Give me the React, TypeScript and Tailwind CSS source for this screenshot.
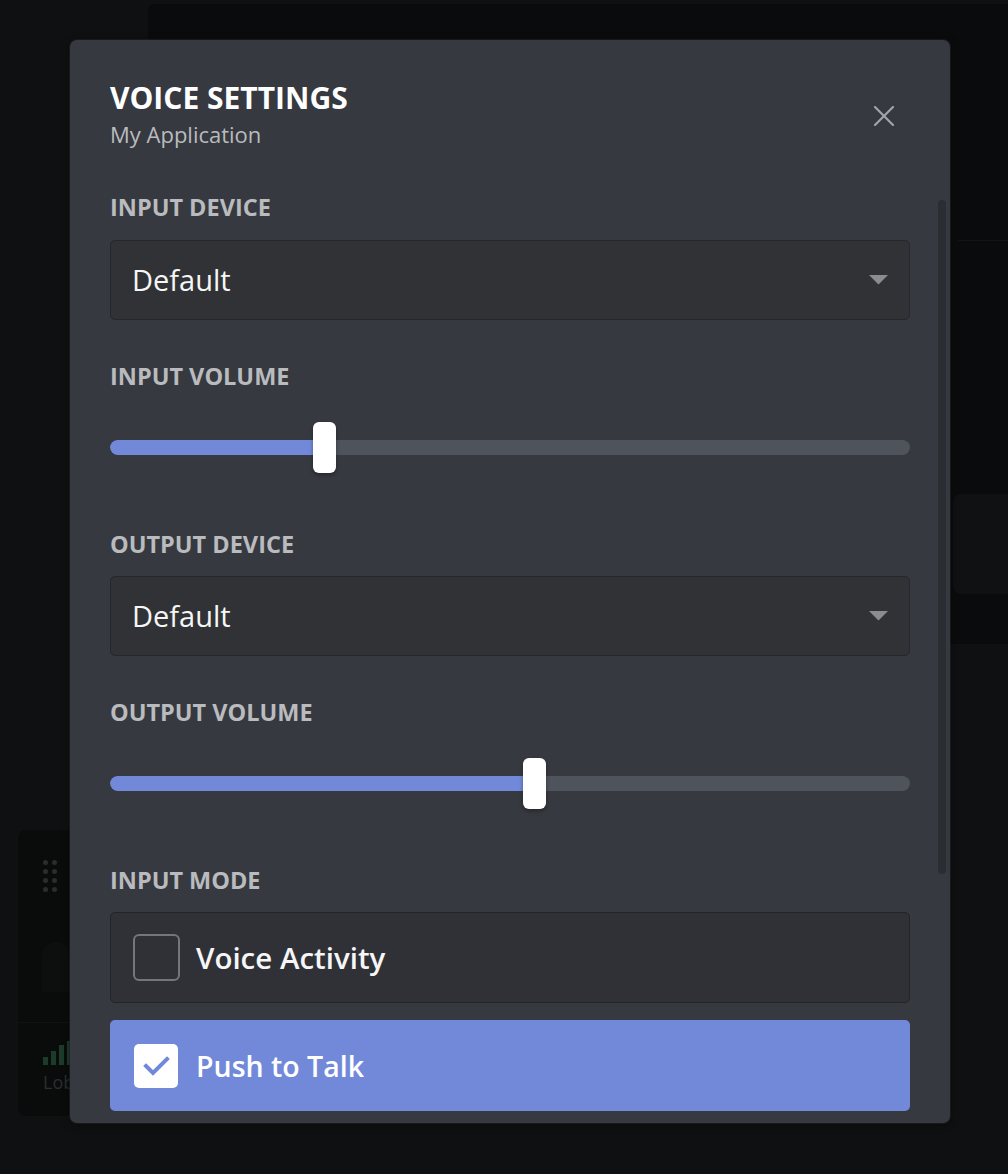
import React from 'react'

const font = { fontFamily: '"Open Sans", "Noto Sans", sans-serif' }

interface SliderProps {
  value: number
}

const Slider: React.FC<SliderProps> = ({ value }) => {
  return (
    <div className="relative h-[51px] flex items-center">
      <div className="w-full h-[15px] rounded-full bg-[#4f545c] overflow-hidden">
        <div className="h-full bg-[#7289da] rounded-full" style={{ width: `${value}%` }} />
      </div>
      <div
        className="absolute top-0 w-[23px] h-[51px] -ml-[11.5px] bg-white rounded-[6px] shadow-[0_2px_4px_rgba(0,0,0,0.35)]"
        style={{ left: `${value}%` }}
      />
    </div>
  )
}

const Select: React.FC<{ label: string }> = ({ label }) => {
  return (
    <div className="h-[80px] rounded-[5px] bg-[#303236] border border-[#25272b] flex items-center justify-between pl-[21px] pr-[21px]">
      <span className="text-[29px] leading-[38px] text-[#f6f6f7]">{label}</span>
      <svg width="19" height="10" viewBox="0 0 19 10">
        <polygon points="0,0 19,0 9.5,9.5" fill="#8a8c90" />
      </svg>
    </div>
  )
}

const Label: React.FC<{ text: string }> = ({ text }) => (
  <div className="text-[23.5px] leading-[28px] font-bold text-[#b9bbbe] uppercase">{text}</div>
)

const App: React.FC = () => {
  return (
    <div className="relative w-[1008px] h-[1174px] overflow-hidden bg-[#0f1011]" style={font}>
      {/* dimmed app behind the modal */}
      <div className="absolute left-[148px] top-[4px] w-[870px] h-[640px] rounded-[6px] bg-[#0a0b0c]">
        <div className="absolute left-[810px] top-[236px] w-[60px] h-px bg-[#141516]" />
        <div className="absolute left-[805px] top-[490px] w-[70px] h-[100px] rounded-l-[8px] bg-[#101112]" />
      </div>
      <div className="absolute left-[18px] top-[830px] w-[120px] h-[286px] rounded-[8px] bg-[#0a0b0b]">
        <div className="grid grid-cols-2 gap-[4px] w-[14px] ml-[25px] mt-[30px]">
          {Array.from({ length: 8 }).map((_, i) => (
            <span key={i} className="w-[5px] h-[5px] rounded-full bg-[#2a2c2f]" />
          ))}
        </div>
        <div className="mt-[50px] ml-[24px] w-[28px] h-[50px] rounded-t-full bg-[#0d0e0e]" />
        <div className="mt-[30px] h-px bg-[#111213]" />
        <div className="mt-[18px] ml-[25px] flex items-end gap-[3px] h-[24px]">
          <span className="w-[5px] h-[8px] bg-[#1d3b2a]" />
          <span className="w-[5px] h-[14px] bg-[#1d3b2a]" />
          <span className="w-[5px] h-[20px] bg-[#1d3b2a]" />
          <span className="w-[5px] h-[24px] bg-[#1d3b2a]" />
        </div>
        <div className="ml-[25px] mt-[4px] text-[18px] text-[#2c2e31]">Lobby</div>
      </div>

      {/* modal */}
      <div className="absolute left-[70px] top-[40px] w-[880px] h-[1083px] rounded-[7px] bg-[#36393f] shadow-[0_0_0_1px_rgba(32,34,37,0.6),0_2px_10px_rgba(0,0,0,0.4)] overflow-hidden">
        <div className="relative pt-[40px] pl-[40px] pr-[40px]">
          <div className="text-[30px] leading-[36px] font-bold text-white">VOICE SETTINGS</div>
          <div className="mt-[4px] text-[22px] leading-[28px] text-[#b9bbbe]">My Application</div>
          <button className="absolute left-[804px] top-[66px] w-[20px] h-[20px]">
            <svg width="20" height="20" viewBox="0 0 20 20" stroke="#a3a5a8" strokeWidth="2.2" strokeLinecap="round">
              <line x1="1" y1="1" x2="19" y2="19" />
              <line x1="19" y1="1" x2="1" y2="19" />
            </svg>
          </button>
        </div>

        <div className="flex items-start mt-[45px]">
          <div className="w-[800px] ml-[40px] shrink-0">
            <Label text="Input Device" />
            <div className="mt-[19px]">
              <Select label="Default" />
            </div>
            <div className="mt-[42px]">
              <Label text="Input Volume" />
            </div>
            <div className="mt-[32px]">
              <Slider value={26.8} />
            </div>
            <div className="mt-[57px]">
              <Label text="Output Device" />
            </div>
            <div className="mt-[18px]">
              <Select label="Default" />
            </div>
            <div className="mt-[42px]">
              <Label text="Output Volume" />
            </div>
            <div className="mt-[32px]">
              <Slider value={53.1} />
            </div>
            <div className="mt-[57px]">
              <Label text="Input Mode" />
            </div>

            <div className="mt-[18px] h-[91px] rounded-[5px] bg-[#2f3136] border border-[#222427] flex items-center">
              <span className="ml-[22px] w-[47px] h-[47px] rounded-[6px] border-2 border-[#72767d]" />
              <span className="ml-[16px] text-[29.5px] leading-[38px] font-semibold text-[#f6f6f7]">Voice Activity</span>
            </div>
            <div className="mt-[17px] h-[91px] rounded-[5px] bg-[#7289da] flex items-center">
              <span className="ml-[24px] w-[44px] h-[44px] rounded-[5px] bg-white flex items-center justify-center">
                <svg width="44" height="44" viewBox="0 0 44 44" fill="none" stroke="#7289da" strokeWidth="4" strokeLinecap="square">
                  <polyline points="12,22 19,29 33,15" />
                </svg>
              </span>
              <span className="ml-[18px] text-[28.5px] leading-[38px] font-semibold text-white">Push to Talk</span>
            </div>
          </div>

          <div className="ml-[28px] mt-[7px] w-[8px] h-[674px] rounded-full bg-[#2a2d31] shrink-0" />
        </div>
      </div>
    </div>
  )
}

export default App
